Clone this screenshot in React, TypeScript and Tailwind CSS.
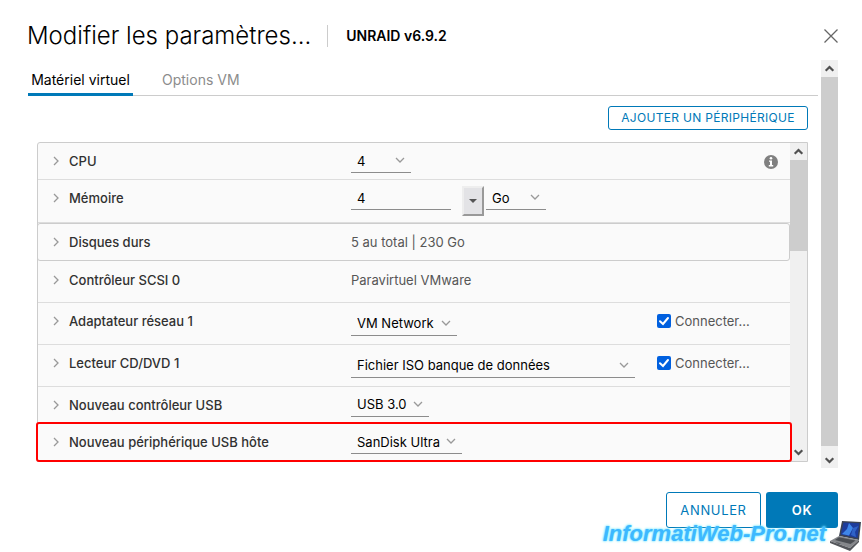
import { ReactNode } from "react";
import clsx from "clsx";

interface DeviceRowProps {
  label: string;
  className: string;
  children: ReactNode;
}

interface LineSelectProps {
  label: string;
  options: string[];
  className: string;
}

function ChevronIcon({ className }: { className: string }) {
  return (
    <svg viewBox="0 0 10 10" fill="none" stroke="currentColor" className={className}>
      <path d="M1 3 L5 7 L9 3" strokeWidth="1.3" />
    </svg>
  );
}

function ScrollArrow({ down = false }: { down?: boolean }) {
  return (
    <svg viewBox="0 0 17 17" fill="none" stroke="#505050" className={clsx("w-full h-[17px]", down && "rotate-180")}>
      <path d="M4.7 10.8 L8.5 7 L12.3 10.8" strokeWidth="2.2" />
    </svg>
  );
}

function LineSelect({ label, options, className }: LineSelectProps) {
  return (
    <div className={clsx("relative h-6 border-b border-[#8c8c8c]", className)}>
      <select
        aria-label={label}
        className="appearance-none w-full h-full pl-[6px] pr-4 bg-transparent text-black outline-none"
      >
        {options.map((option) => (
          <option key={option}>{option}</option>
        ))}
      </select>
      <ChevronIcon className="absolute right-[6px] top-[6px] size-[10px] text-[#999] pointer-events-none" />
    </div>
  );
}

function DeviceRow({ label, className, children }: DeviceRowProps) {
  return (
    <div className={clsx("flex items-center", className)}>
      <button type="button" className="flex items-center gap-2 w-[313px] pl-[13px] shrink-0 font-medium text-[#313131]">
        <ChevronIcon className="size-[10px] -rotate-90 text-[#999]" />
        {label}
      </button>
      {children}
    </div>
  );
}

function ConnectBox({ id }: { id: string }) {
  return (
    <div className="flex items-center gap-1 w-[133px] shrink-0 text-[#565656]">
      <input
        id={id}
        type="checkbox"
        defaultChecked
        className="appearance-none size-[14px] rounded-xs bg-[#0060df]"
      />
      <svg viewBox="0 0 14 14" fill="none" stroke="white" className="-ml-[18px] size-[14px] pointer-events-none">
        <path d="M3 7.2 L6 10 L11 4" strokeWidth="2" strokeLinecap="round" />
      </svg>
      <label htmlFor={id}>Connecter...</label>
    </div>
  );
}

function InfoIcon() {
  return (
    <svg viewBox="0 0 14 14" className="size-[14px]">
      <circle cx="7" cy="7" r="7" fill="#808080" />
      <circle cx="7" cy="3.3" r="1.3" fill="white" />
      <path d="M5 5.4 H8 V10 H9.2 V11.4 H4.8 V10 H6 V6.8 H5 Z" fill="white" />
    </svg>
  );
}

function Laptop() {
  return (
    <svg viewBox="0 0 32 32" className="w-8 h-8">
      <path d="M12 1 L31 2 L29 20 L9 16 Z" fill="#3c4352" />
      <path d="M13.5 2.5 L29.5 3.3 L27.5 18 L10.8 14.5 Z" fill="#1d3c9c" />
      <path d="M19 3 L23 8 L19 15.5 L12 14 L17 9 Z" fill="#3f86e8" />
      <path d="M23 8 L28.5 6 L25 12 L26 17 L21 15 Z" fill="#2f62c8" />
      <path d="M9 16 L29 20 L20 28 L0 21 Z" fill="#85878b" />
      <path d="M9 17.2 L25.5 20.6 L20.5 24 L5 20 Z" fill="#4b4e53" />
      <path d="M7 22.2 L11 23.4 L9.5 24.2 L5.5 22.8 Z" fill="#5c5f64" />
      <path d="M0 21 L20 28 L29 20 V22 L20 31 L0 23 Z" fill="#54565b" />
    </svg>
  );
}

export default function App() {
  return (
    <div className="relative min-h-screen bg-white pl-7 pr-6 pt-5 font-['Inter','Noto_Sans',sans-serif] text-[13px] leading-5 text-black">
      <header className="flex items-center h-8">
        <h1 className="-ml-px text-2xl font-light whitespace-nowrap">Modifier les paramètres...</h1>
        <div className="ml-4 h-[22px] w-px bg-[#ccc]" />
        <h2 className="ml-[18px] text-sm font-semibold">UNRAID v6.9.2</h2>
        <button type="button" aria-label="Fermer" className="ml-auto text-[#666]">
          <svg viewBox="0 0 14 14" fill="none" stroke="currentColor" className="size-[14px]">
            <path d="M0.5 0.5 L13.5 13.5 M13.5 0.5 L0.5 13.5" strokeWidth="1.3" />
          </svg>
        </button>
      </header>

      <div className="flex mt-2 gap-[3px]">
        <main className="flex-1 min-w-0">
          <nav className="flex h-9 border-b border-[#ccc] text-sm">
            <button
              type="button"
              className="pt-[6px] h-9 w-[105px] shrink-0 border-b-3 border-[#0079b8] whitespace-nowrap"
            >
              Matériel virtuel
            </button>
            <button type="button" className="pt-[6px] ml-[29px] h-9 border-b-3 border-transparent text-[#8c8c8c]">
              Options VM
            </button>
          </nav>

          <div className="pl-[9px] pr-[10px]">
            <div className="flex justify-end pt-[10px] pb-3">
              <button
                type="button"
                className="w-[200px] h-6 rounded-[3px] border border-[#0079b8] text-xs tracking-wide whitespace-nowrap text-[#0079b8]"
              >
                AJOUTER UN PÉRIPHÉRIQUE
              </button>
            </div>

            <div className="flex border border-[#ccc] rounded-tl-[3px] bg-[#fafafa]">
              <div className="flex-1 min-w-0">
                <DeviceRow label="CPU" className="h-[37px] border-b border-[#ddd]">
                  <LineSelect label="CPU" options={["4"]} className="w-[60px]" />
                  <button type="button" aria-label="Informations" className="ml-auto mr-3 pt-[2px]">
                    <InfoIcon />
                  </button>
                </DeviceRow>
                <DeviceRow label="Mémoire" className="h-[43px] pb-[6px] border-b border-[#ddd]">
                  <input
                    aria-label="Mémoire"
                    defaultValue="4"
                    className="w-[100px] h-6 pl-[6px] border-b border-[#8c8c8c] bg-transparent outline-none"
                  />
                  <button
                    type="button"
                    aria-label="Valeurs"
                    className="mt-[6px] ml-[11px] flex items-center justify-center w-[22px] h-[30px] border-2 border-t-[#eee] border-l-[#eee] border-r-[#999] border-b-[#999] bg-[#e3e3e6]"
                  >
                    <svg viewBox="0 0 8 4" className="w-2 h-1">
                      <path d="M0 0 H8 L4 4 Z" fill="#555" />
                    </svg>
                  </button>
                  <LineSelect label="Unité" options={["Go", "Mo"]} className="ml-[2px] w-[60px]" />
                </DeviceRow>
                <DeviceRow label="Disques durs" className="h-[38px] -ml-px rounded-[3px] border border-[#ccc]">
                  <span className="text-[#565656]">5 au total | 230 Go</span>
                </DeviceRow>
                <DeviceRow label="Contrôleur SCSI 0" className="h-[42px] pb-1 border-b border-[#ddd]">
                  <span className="text-[#565656]">Paravirtuel VMware</span>
                </DeviceRow>
                <DeviceRow label="Adaptateur réseau 1" className="h-[42px] pb-[6px] border-b border-[#ddd]">
                  <LineSelect label="Réseau" options={["VM Network"]} className="w-[106px] mt-[6px]" />
                  <div className="ml-auto">
                    <ConnectBox id="connect-network" />
                  </div>
                </DeviceRow>
                <DeviceRow label="Lecteur CD/DVD 1" className="h-[42px] pb-[6px] border-b border-[#ddd]">
                  <LineSelect label="Support" options={["Fichier ISO banque de données"]} className="w-[284px] mt-[6px]" />
                  <div className="ml-auto">
                    <ConnectBox id="connect-cd" />
                  </div>
                </DeviceRow>
                <DeviceRow label="Nouveau contrôleur USB" className="h-[35px]">
                  <LineSelect label="Contrôleur USB" options={["USB 3.0"]} className="w-[78px]" />
                </DeviceRow>
                <DeviceRow
                  label="Nouveau périphérique USB hôte"
                  className="relative h-10 -mx-[2px] -mb-px rounded-[3px] border-2 border-[#f00]"
                >
                  <LineSelect label="Périphérique USB" options={["SanDisk Ultra"]} className="w-[111px]" />
                </DeviceRow>
              </div>
              <div className="flex flex-col w-[17px] bg-[#f0f0f0]">
                <ScrollArrow />
                <div className="h-[91px] bg-[#cdcdcd]" />
                <div className="mt-auto">
                  <ScrollArrow down />
                </div>
              </div>
            </div>
          </div>
        </main>

        <div className="flex flex-col w-[17px] h-[408px] bg-[#f0f0f0]">
          <ScrollArrow />
          <div className="flex-1 bg-[#cdcdcd]" />
          <div className="h-[22px] pt-[6px]">
            <ScrollArrow down />
          </div>
        </div>
      </div>

      <footer className="flex justify-end gap-[5px] mt-6">
        <button
          type="button"
          className="w-[95px] h-9 rounded-[3px] border border-[#0079b8] tracking-wider text-[#0079b8]"
        >
          ANNULER
        </button>
        <button type="button" className="w-[72px] h-9 rounded-[3px] bg-[#0079b8] font-semibold tracking-wider text-white">
          OK
        </button>
      </footer>

      <div className="absolute right-0 bottom-0 flex items-start gap-1">
        <span className="font-['Liberation_Sans',sans-serif] text-[22px] leading-7 font-bold italic text-[#3db8ff] [text-shadow:0_0_2px_#5fe0ff,0_0_3px_#8ff0ff]">
          InformatiWeb-Pro.net
        </span>
        <Laptop />
      </div>
    </div>
  );
}
